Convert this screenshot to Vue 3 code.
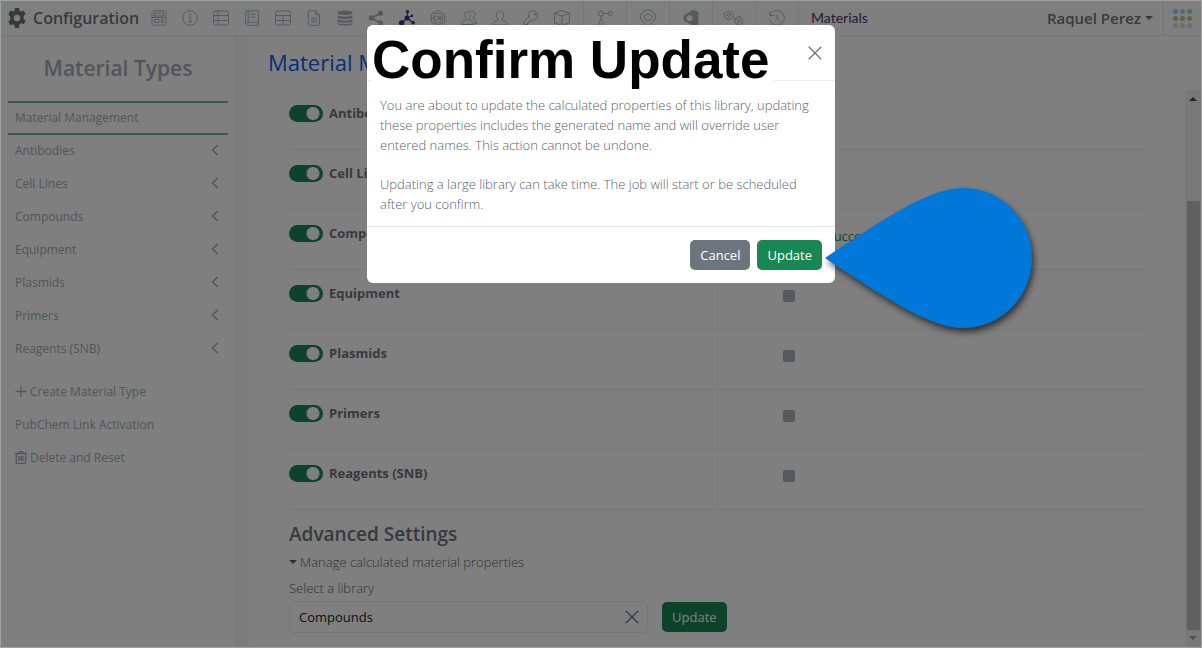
<script setup>
import { ref } from 'vue'

const types = ['Antibodies', 'Cell Lines', 'Compounds', 'Equipment', 'Plasmids', 'Primers', 'Reagents (SNB)']
const rows = ref(types.map((name) => ({ name, on: true, status: name === 'Compounds' ? 'Success' : '' })))
const library = ref('Compounds')

const tools = [
  { label: 'Forms', svg: '<rect x="1" y=".8" width="14" height="14.400" rx="1.500"/><path d="M3.500 3h9v3h-9zM3.500 9.500h4.500v3H3.500zM10 9.500h2.500M10 11h2.500M10 12.500h2.500M1 7.500h14"/>' },
  { label: 'Information', svg: '<circle cx="8" cy="8" r="7.3"/><path d="M6.5 7h2v4.500M6.200 11.600h4"/><circle cx="8" cy="4.500" r=".6"/>' },
  { label: 'List', svg: '<rect x=".5" y="1" width="15" height="14" rx="1.800"/><path d="M.5 5.500h15M.5 10.500h15M5 1v14"/>' },
  { label: 'Notebook', svg: '<path d="M3 .8h11.3v14.5H3.2A1.7 1.7 0 0 1 1.6 13.600V2.200A1.500 1.500 0 0 1 3 .8zM4.200 .8v11.500M14.300 12.300H3.200a1.500 1.500 0 0 0-1.500 1.500M6.500 4.200h5M6.500 7h5"/>' },
  { label: 'Table', svg: '<rect x=".5" y="1" width="15" height="14" rx="1.800"/><path d="M.5 5.500h15M.5 10.500h15M8 5.500v9.500"/>' },
  { label: 'Document', svg: '<path d="M3.500 .8h6.200l3.800 3.800v9.400a1.300 1.300 0 0 1-1.300 1.300H3.500a1.300 1.300 0 0 1-1.300-1.300V2.100A1.300 1.300 0 0 1 3.500 .8zM9.500 .8v4h4M5 8h6M5 10h6M5 12h6"/>' },
  { label: 'Database', fill: true, svg: '<path d="M.5 2.500C.5 -.2 15.500 -.2 15.500 2.500v1C15.500 5.500 .5 5.500 .5 3.500zM.5 5.300c2 1.700 13 1.700 15 0v2.200c0 2-15 2-15 0zM.5 9.200c2 1.700 13 1.700 15 0v2c0 2-15 2-15 0zM.5 12.700c2 1.700 13 1.700 15 0v1c0 2.500-15 2.500-15 0z"/>' },
  { label: 'Share', fill: true, svg: '<circle cx="12.500" cy="3.200" r="2.600"/><circle cx="3.400" cy="8" r="2.800"/><circle cx="12.500" cy="12.800" r="2.600"/><path d="M3 7.300l9-4.900.8 1.500-9 4.900zM3.800 7.200l9 4.900-.8 1.500-9-4.900z"/>' },
  { label: 'Materials', fill: true, active: true, svg: '<circle cx="8" cy="8" r="2.500"/><circle cx="8.500" cy="1.800" r="1.700"/><circle cx="2.600" cy="13" r="2.700"/><circle cx="14.100" cy="12.800" r="1.800"/><circle cx="13" cy="5.700" r="1.300"/><path d="M8 2h1L8.600 8h-1zM7.600 7.700l.9.900-5.400 5-.8-1zM8.700 7.500l5.600 5-.6.900-6-4.800zM8 7.400l5-2.200.3.900-5 2.300z"/>' },
  { label: 'Chemistry', svg: '<path d="M8 .5l6.800 3.700v7.600L8 15.500l-6.800-3.700V4.200z"/><circle cx="8" cy="8" r="4.700"/><path d="M7.500 6.300a2 2 0 1 0 0 3.400M8.500 6.200h.8a1.800 1.800 0 0 1 0 3.600h-.8zM8.500 8h2"/>' },
  { label: 'Groups', svg: '<path d="M5.300 8.800C2.900 6.500 3.200 1.800 6.500 1.800s3.600 4.700 1.200 7c0 2 4.600 1.200 4.800 5.700H.6c.2-4.500 4.700-3.700 4.700-5.700zM8.700 1.600c2.600-2.200 6 .2 5 4-.3 1.300-1 2-1.500 2.600.1 1.700 3.300 1.500 3.300 5.300h-2"/>' },
  { label: 'Users', svg: '<path d="M6.300 9C3.300 6.500 3.600 1 8 1s4.700 5.500 1.700 8c0 2.300 5.300 1.500 5.600 6H.7c.3-4.500 5.600-3.700 5.600-6z"/>' },
  { label: 'Permissions', svg: '<path d="M6.300 8.300A4.700 4.700 0 1 1 9 10l-1.500 1.300H6v1.500H4.500v1.700H.8v-2.800l5.500-5.400"/><circle cx="12" cy="4" r=".9"/>' },
  { label: 'Inventory', svg: '<path d="M8 .6l7.500 2.700v9.500L8 15.500.5 12.800V3.300zM.5 3.300L8 6l7.500-2.700M8 6v9.500"/>' },
]
const sections = [
  { label: 'Workflow', svg: '<circle cx="3.800" cy="3.500" r="2.500"/><circle cx="13.500" cy="3.500" r="2"/><path d="M6.300 3.500h5.200M4 6v3M4 9l-2 4 1 2.300h2L6 13z"/>' },
  { label: 'Locations', svg: '<path d="M8 17C5 13 .6 10.500 .6 7a7.400 7 0 0 1 14.800 0C15.400 10.500 11 13 8 17z"/><circle cx="8" cy="7.300" r="3.700"/>' },
  { label: 'Modules', fill: true, svg: '<path fill-rule="evenodd" d="M9.500 0c2 0 6 1 6 3v10c0 2-3 3-5 3L2 11.500C0 10.500 0 6 2 4.800zM6.500 5.300a2.900 2.900 0 1 0 0 5.800 2.900 2.900 0 0 0 0-5.800z"/>' },
  { label: 'Automation', svg: '<path d="M4.500 .8l1.500 1 1.800-.2.700 1.700 1.200 1-.7 1.600.1 1.700-1.700.6-1.100 1.300L4.700 9l-1.800.4-.9-1.500L.4 7.100.8 5.400.2 3.700l1.500-.9z"/><circle cx="4.900" cy="5" r="1.500"/><path d="M14 6.800h2.500l.7 1.600 1.600.9-.7 1.700.4 1.700-1.700.7-1 1.300-1.600-.7-1.800.3-.6-1.600-1.300-1 .7-1.700-.3-1.700 1.600-.4z"/><circle cx="14.700" cy="10.700" r="1.300"/>' },
  { label: 'History', svg: '<path d="M.8 1v4.500h4.500M1.100 5.300A7.300 7.300 0 1 1 .8 9.500M8.300 4.500V9l3 2.200"/>' },
]
</script>

<template>
  <div class="page">
    <header class="topbar">
      <svg class="gear" viewBox="0 0 20 20" aria-hidden="true">
        <path fill-rule="evenodd" d="M8 0h4l.5 2.700 1.600.9 2.600-1 2 3.500L16.600 8a7 7 0 0 1 0 2.800l2.100 1.900-2 3.500-2.600-1-1.600 1L12 20H8l-.5-2.800-1.600-1-2.600 1-2-3.500L3.400 11a7 7 0 0 1 0-2L1.300 6.100l2-3.500 2.600 1 1.600-.9zM10 6.800a3.200 3.200 0 1 0 0 6.400 3.200 3.200 0 0 0 0-6.400z" />
      </svg>
      <span class="brand">Configuration</span>
      <nav class="tools" aria-label="Configuration areas">
        <button v-for="t in tools" :key="t.label" type="button" class="tool" :class="{ solid: t.fill, active: t.active }" :aria-label="t.label">
          <svg viewBox="0 0 16 16" v-html="t.svg"></svg>
        </button>
      </nav>
      <nav class="sections" aria-label="Sections">
        <button v-for="t in sections" :key="t.label" type="button" class="tool section" :class="{ solid: t.fill, wide: t.label === 'Automation' }" :aria-label="t.label">
          <svg :viewBox="t.label === 'Automation' ? '0 0 20 16' : '0 0 16 16'" v-html="t.svg"></svg>
        </button>
      </nav>
      <span class="crumb">Materials</span>
      <button type="button" class="user">Raquel Perez<i class="caret"></i></button>
      <button type="button" class="apps" aria-label="Applications">
        <i v-for="n in 9" :key="n" :class="n < 4 ? 'blue' : n < 7 ? 'lime' : 'pale'"></i>
      </button>
    </header>

    <div class="columns">
      <aside class="sidebar">
        <h2>Material Types</h2>
        <a href="#management" class="current">Material Management</a>
        <a v-for="t in types" :key="t" href="#type" class="item">
          <span>{{ t }}</span>
          <svg class="chevron" viewBox="0 0 8 12"><path d="M7 .7L1.500 6 7 11.300" /></svg>
        </a>
        <div class="extra">
          <a href="#create" class="item"><svg viewBox="0 0 12 12"><path d="M6 .5v11M.5 6h11" /></svg>Create Material Type</a>
          <a href="#pubchem" class="item">PubChem Link Activation</a>
          <a href="#delete" class="item"><svg viewBox="0 0 12 13"><path d="M0 2.500h12M3.500 2.500L4.500.7h3l1 1.800M1.300 2.500v8.500a1.500 1.500 0 0 0 1.500 1.500h6.400a1.500 1.500 0 0 0 1.500-1.500V2.500M4 5v5M6 5v5M8 5v5" /></svg>Delete and Reset</a>
        </div>
      </aside>

      <main class="main">
        <h1>Material Management</h1>
        <div class="scroller">
          <div class="content">
            <table>
              <tbody>
                <tr v-for="r in rows" :key="r.name">
                  <td>
                    <label class="switch"><input v-model="r.on" type="checkbox" role="switch" />{{ r.name }}</label>
                  </td>
                  <td>
                    <div class="state">
                      <input type="checkbox" disabled :aria-label="r.name + ' option'" />
                      <span>{{ r.status }}</span>
                    </div>
                  </td>
                </tr>
              </tbody>
            </table>
            <h3>Advanced Settings</h3>
            <button type="button" class="disclosure"><i class="caret"></i>Manage calculated material properties</button>
            <label class="field-label" for="library">Select a library</label>
            <div class="field-row">
              <div class="combo">
                <input id="library" v-model="library" type="text" />
                <button type="button" aria-label="Clear library" @click="library = ''">
                  <svg viewBox="0 0 14 14"><path d="M.7 .7l12.600 12.600M13.300 .7L.7 13.300" /></svg>
                </button>
              </div>
              <button type="button" class="btn green">Update</button>
            </div>
          </div>
          <div class="scrollbar" aria-hidden="true">
            <i class="arrow up"></i>
            <div class="thumb"></div>
            <i class="arrow down"></i>
          </div>
        </div>
      </main>
    </div>

    <div class="backdrop">
      <section class="modal" role="dialog" aria-modal="true" aria-labelledby="dialog-title">
        <header class="modal-head">
          <h2 id="dialog-title">Confirm Update</h2>
          <button type="button" class="close" aria-label="Close">
            <svg viewBox="0 0 14 14"><path d="M.7 .7l12.600 12.600M13.300 .7L.7 13.300" /></svg>
          </button>
        </header>
        <div class="modal-body">
          <p>You are about to update the calculated properties of this library, updating<br />these properties includes the generated name and will override user<br />entered names. This action cannot be undone.</p>
          <p>Updating a large library can take time. The job will start or be scheduled<br />after you confirm.</p>
        </div>
        <footer class="modal-foot">
          <button type="button" class="btn grey">Cancel</button>
          <button type="button" class="btn green">Update</button>
        </footer>
        <svg class="pointer" viewBox="0 0 207 140" aria-hidden="true">
          <path d="M0 70C60 30 105 0 138 0A69 70 0 0 1 138 140C105 140 60 110 0 70z" />
        </svg>
      </section>
    </div>
    <div class="frame" aria-hidden="true"></div>
  </div>
</template>

<style>
body {
  margin: 0;
}
</style>

<style scoped>
* {
  box-sizing: border-box;
}
.page {
  position: relative;
  display: flex;
  flex-direction: column;
  height: 100vh;
  overflow: hidden;
  padding: 1px;
  background: #fff;
  color: #6c757d;
  font: 13px/20px "Open Sans", "Noto Sans", sans-serif;
}
button,
input {
  margin: 0;
  font: inherit;
  color: inherit;
}
button {
  padding: 0;
  border: 0;
  background: none;
}
a {
  color: inherit;
  text-decoration: none;
}
svg {
  display: block;
  flex: none;
  fill: none;
  stroke: currentColor;
}
h1,
h2,
h3,
p {
  margin: 0;
}
.caret {
  border: 4px solid transparent;
  border-top-color: currentColor;
  border-bottom: 0;
}

.topbar {
  display: flex;
  align-items: center;
  height: 35px;
  flex: none;
  padding-left: 6px;
  border-bottom: 1px solid #ececec;
}
.gear {
  width: 20px;
  height: 20px;
  fill: #6c757d;
  stroke: none;
}
.brand {
  width: 110px;
  margin-left: 6px;
  font-size: 16px;
  line-height: 22px;
  font-weight: 600;
  white-space: nowrap;
}
.tools,
.sections {
  display: flex;
  flex: none;
}
.tools {
  margin-right: 6px;
}
.tool {
  display: flex;
  align-items: center;
  justify-content: center;
  width: 31px;
  height: 34px;
  color: #adb5bd;
}
.tool svg {
  width: 16px;
  height: 16px;
  overflow: visible;
}
.solid svg {
  fill: currentColor;
  stroke: none;
}
.active {
  color: #482a86;
}
.section {
  width: 43px;
  border-left: 1px solid #efefef;
}
.section.wide svg {
  width: 20px;
}
.crumb {
  padding-left: 12px;
  border-left: 1px solid #efefef;
  color: #4a3470;
  font: 14px/34px Lato, "Open Sans", sans-serif;
}
.user {
  display: flex;
  align-items: center;
  gap: 4px;
  margin-left: auto;
  font-size: 15px;
  font-weight: 600;
}
.apps {
  display: grid;
  grid-template-columns: repeat(3, 5px);
  gap: 2px;
  justify-content: center;
  align-content: center;
  width: 38px;
  height: 34px;
  margin-left: 10px;
  border-left: 1px solid #e8e8e8;
}
.apps i {
  width: 5px;
  height: 5px;
  border-radius: 50%;
}
.blue {
  background: #9bd3ea;
}
.lime {
  background: #b3cf92;
}
.pale {
  background: #d8d8d8;
}

.columns {
  display: flex;
  flex: 1;
  gap: 13px;
  min-height: 0;
  background: #f8f8f8;
}
.sidebar {
  flex: none;
  width: 235px;
  padding: 0 7px;
  border-right: 1px solid #ececec;
  background: #fff;
  color: #a3abb2;
  font-size: 12px;
}
.sidebar h2 {
  padding: 18px 0;
  font-size: 21px;
  line-height: 29px;
  font-weight: 600;
  text-align: center;
}
.current {
  display: block;
  padding: 0 7px;
  border: solid #7fae96;
  border-width: 2px 0;
  line-height: 30px;
}
.item {
  display: flex;
  align-items: center;
  gap: 3px;
  height: 33px;
  padding: 0 9px 2px 7px;
}
.item svg {
  width: 12px;
  height: 13px;
  stroke-width: 1.3;
}
.item .chevron {
  width: 8px;
  height: 12px;
  margin: 0 0 2px auto;
}
.extra {
  margin-top: 7px;
  padding-top: 2px;
  border-top: 1px solid #f8f8f8;
}

.main {
  display: flex;
  flex: 1;
  flex-direction: column;
  min-width: 0;
  background: #fff;
}
h1 {
  flex: none;
  padding-left: 19px;
  border-bottom: 1px solid #f6f6f6;
  color: #0d60f0;
  font-size: 22px;
  line-height: 53px;
  font-weight: 400;
}
.scroller {
  display: flex;
  flex: 1;
  min-height: 0;
}
.content {
  flex: 1;
  padding: 0 41px 0 40px;
}
table {
  width: 100%;
  border-collapse: separate;
  border-spacing: 0;
  table-layout: fixed;
}
td {
  height: 60px;
  padding: 0;
  border-bottom: 1px solid #efefef;
  vertical-align: top;
}
td + td {
  border-left: 1px solid #f3f3f3;
}
.switch {
  display: flex;
  align-items: center;
  gap: 6px;
  padding-top: 13px;
  font-weight: 700;
}
.switch input {
  appearance: none;
  width: 34px;
  height: 17px;
  border-radius: 9px;
  background: radial-gradient(circle at 24px 50%, #fff 6px, #198754 7px);
}
.state {
  display: flex;
  align-items: flex-end;
  gap: 32px;
  height: 32px;
  padding-left: 65px;
  color: #198754;
}
.state span {
  line-height: 12px;
}
.state input {
  appearance: none;
  width: 12px;
  height: 12px;
  border-radius: 2px;
  background: #adb1bb;
}
h3 {
  padding: 12px 0 6px;
  font-size: 19px;
  line-height: 24px;
  font-weight: 600;
}
.disclosure {
  display: flex;
  align-items: center;
  gap: 3px;
  height: 20px;
  color: #59626a;
  font-weight: 300;
}
.field-label {
  display: block;
  padding: 6px 0 3px;
  color: #59626a;
  font-weight: 300;
}
.field-row {
  display: flex;
  align-items: center;
  gap: 14px;
}
.combo {
  display: flex;
  align-items: center;
  width: 42%;
  height: 32px;
  padding: 0 8px 0 9px;
  border: 1px solid #eaeaea;
  border-radius: 5px;
}
.combo input {
  flex: 1;
  min-width: 0;
  padding: 0;
  border: 0;
  outline: 0;
  background: none;
  color: #212529;
}
.combo svg,
.close svg {
  width: 14px;
  height: 14px;
  stroke-width: 1.3;
}
.btn {
  height: 30px;
  padding: 0 10px;
  border-radius: 5px;
  color: #fff;
}
.btn.green {
  background: #198754;
}
.btn.grey {
  background: #6c757d;
}
.scrollbar {
  display: flex;
  flex-direction: column;
  align-items: center;
  width: 16px;
  padding: 7px 0;
  background: #f1f1f1;
}
.thumb {
  flex: 1;
  width: 13px;
  margin: 100px 0 6px;
  background: #c1c1c1;
}
.arrow {
  border: 4px solid transparent;
}
.up {
  border-top: 0;
  border-bottom-color: #444;
}
.down {
  border-bottom: 0;
  border-top-color: #999;
}

.backdrop {
  position: absolute;
  inset: 0;
  display: flex;
  justify-content: center;
  align-items: flex-start;
  padding-top: 25px;
  background: rgba(0, 0, 0, 0.5);
}
.modal {
  position: relative;
  width: 468px;
  border-radius: 6px;
  background: #fff;
  color: #6c757d;
}
.modal-head {
  display: flex;
  align-items: flex-start;
  height: 56px;
  padding: 0 13px 0 4px;
  border-bottom: 1px solid #e9ecef;
}
.modal-head h2 {
  padding: 5px 4px 0 1px;
  background: #fff;
  color: #000;
  font: bold 53px/60px "Liberation Sans", Arial, sans-serif;
  white-space: nowrap;
}
.close {
  margin: 21px 0 0 auto;
}
.modal-body {
  padding: 14px 13px 12px;
  color: #59626a;
  font-weight: 300;
  white-space: nowrap;
}
.modal-body p + p {
  margin-top: 19px;
}
.modal-foot {
  display: flex;
  justify-content: flex-end;
  gap: 7px;
  padding: 13px;
  border-top: 1px solid #e4e7ea;
}
.pointer {
  position: absolute;
  left: 458px;
  top: 163px;
  width: 207px;
  height: 140px;
  overflow: visible;
  fill: #0078d9;
  stroke: none;
  filter: drop-shadow(2px 4px 3px rgba(0, 0, 0, 0.6));
}
.frame {
  position: absolute;
  inset: 0;
  border: 1px solid #a0a2a1;
  pointer-events: none;
}
</style>
